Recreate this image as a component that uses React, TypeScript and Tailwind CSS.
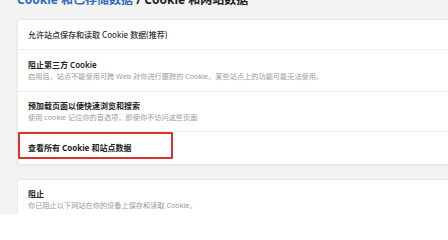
export default function App() {
  return (
    <div className="w-[448px] h-[214px] overflow-hidden bg-[#f3f3f3] pl-[17px] font-['Noto_Sans','Noto_Sans_CJK_SC',sans-serif]">
      {/* breadcrumb header, cut off at the top */}
      <p className="-mt-[7px] h-[14px] text-[12px] leading-[14px] font-bold whitespace-nowrap">
        <span className="text-[#2f6cc0]">Cookie 和已存储数据</span>
        <span className="text-[#1f1f1f]"> / Cookie 和网站数据</span>
      </p>

      <div className="mt-[12px] -mr-[20px] bg-white rounded-[4px] border border-[#e8e8e8] shadow-[0_1px_2px_rgba(0,0,0,0.06)]">
        <div className="h-[29px] flex items-center px-[10px] text-[8px] text-[#333] font-medium">
          允许站点保存和读取 Cookie 数据(推荐)
        </div>

        <div className="h-[42px] flex flex-col justify-center px-[10px] border-t border-[#efefef]">
          <p className="text-[8px] leading-[12px] font-semibold text-[#222]">阻止第三方 Cookie</p>
          <p className="text-[7.2px] leading-[11px] text-[#9a9a9a] whitespace-nowrap">
            启用后，站点不能使用可跨 Web 对你进行跟踪的 Cookie。某些站点上的功能可能无法使用。
          </p>
        </div>

        <div className="h-[40px] flex flex-col justify-center px-[10px] border-t border-[#efefef]">
          <p className="text-[8px] leading-[12px] font-semibold text-[#222]">预加载页面以便快速浏览和搜索</p>
          <p className="text-[7.2px] leading-[11px] text-[#9a9a9a] whitespace-nowrap">
            使用 cookie 记住你的首选项，即使你不访问这些页面
          </p>
        </div>

        <div className="relative h-[33px] flex items-center px-[10px] border-t border-[#efefef]">
          <p className="text-[8px] font-bold text-[#222]">查看所有 Cookie 和站点数据</p>
          {/* red highlight annotation */}
          <div className="absolute left-[0px] top-[0px] w-[155px] h-[27px] border-2 border-[#d8342c] rounded-[1px]" />
        </div>
      </div>

      <div className="mt-[14px] -mr-[20px] h-[60px] bg-white rounded-[4px] border border-[#e8e8e8] px-[10px] pt-[8px]">
        <p className="text-[8px] leading-[12px] font-semibold text-[#222]">阻止</p>
        <p className="text-[7.2px] leading-[11px] text-[#9a9a9a] whitespace-nowrap">
          你已阻止以下网站在你的设备上保存和读取 Cookie。
        </p>
      </div>
    </div>
  );
}
